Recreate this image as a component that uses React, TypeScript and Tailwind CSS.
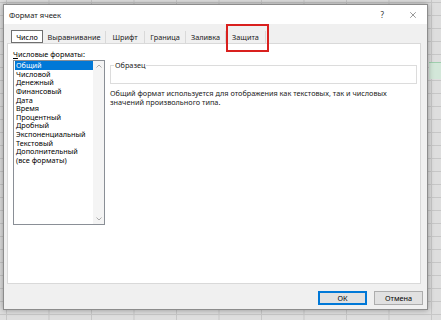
import { X } from "lucide-react";

const formats = [
  "Общий",
  "Числовой",
  "Денежный",
  "Финансовый",
  "Дата",
  "Время",
  "Процентный",
  "Дробный",
  "Экспоненциальный",
  "Текстовый",
  "Дополнительный",
  "(все форматы)",
];

const tabs = [
  { label: "Выравнивание", w: "w-[63px]" },
  { label: "Шрифт", w: "w-[39px]" },
  { label: "Граница", w: "w-[41px]" },
  { label: "Заливка", w: "w-[40px]" },
  { label: "Защита", w: "w-[40px]" },
];

const App = () => {
  return (
    <div className="relative w-[441px] h-[320px] overflow-hidden bg-[#dedede] bg-[linear-gradient(#c7c7c7_1px,transparent_1px),linear-gradient(90deg,#c7c7c7_1px,transparent_1px)] bg-size-[42.5px_13px] bg-position-[6px_2px] pl-[3px] pt-[4px] font-['Noto_Sans',sans-serif] text-[7.3px] leading-[8px] text-black">
      {/* excel selected row behind the dialog */}
      <div className="absolute left-[429px] top-[62px] w-[12px] h-[17px] bg-[#d3e7d9] border-t border-[#9fcfae]" />

      <div className="relative flex flex-col w-[425px] h-[306px] bg-[#f0f0f0] border border-[#8c8c8c] shadow-[0_0_6px_rgba(0,0,0,0.35)]">
        {/* title bar */}
        <div className="flex items-center h-[19px] bg-white pl-[5px] pr-[9px] text-[7.6px]">
          <span className="text-[#1a1a1a]">Формат ячеек</span>
          <span className="ml-auto mr-[24px] text-[8px] text-[#333]">?</span>
          <X size={10} strokeWidth={1.2} className="text-[#333]" />
        </div>

        {/* tabs */}
        <div className="flex items-end h-[19px] pl-[7px]">
          <div className="flex items-center justify-center w-[32px] h-[13px] bg-white border border-[#6f6f6f]">
            Число
          </div>
          {tabs.map((t) => (
            <div
              key={t.label}
              className={`flex items-center justify-center ${t.w} h-[12px] border-r border-[#d9d9d9] text-[#222]`}
            >
              {t.label}
            </div>
          ))}
        </div>

        {/* content panel */}
        <div className="flex ml-[3px] mr-[6px] h-[241px] bg-white border border-[#d9d9d9]">
          <div className="flex flex-col pl-[5px] pt-[6px]">
            <span>
              <span className="underline underline-offset-1">Ч</span>исловые форматы:
            </span>
            <div className="flex mt-[2px] w-[92px] h-[165px] border border-[#8a8f96]">
              <div className="flex-1 flex flex-col pl-[1px] leading-[8.64px]">
                {formats.map((f, i) => (
                  <div
                    key={f}
                    className={`pl-[1px] whitespace-nowrap ${i === 0 ? "bg-[#0078d7] text-white" : ""}`}
                  >
                    {f}
                  </div>
                ))}
              </div>
              <div className="flex flex-col items-center justify-between w-[11px] bg-[#f4f4f4] py-[3px]">
                <svg width="6" height="4" viewBox="0 0 6 4">
                  <path d="M0.5 3.5 L3 1 L5.5 3.5" fill="none" stroke="#a3a3a3" strokeWidth="0.9" />
                </svg>
                <svg width="6" height="4" viewBox="0 0 6 4">
                  <path d="M0.5 0.5 L3 3 L5.5 0.5" fill="none" stroke="#a3a3a3" strokeWidth="0.9" />
                </svg>
              </div>
            </div>
          </div>

          <div className="flex flex-col flex-1 pl-[5px] pr-[3px]">
            <fieldset className="mt-[17px] h-[23px] border border-[#dcdcdc] px-[3px]">
              <legend className="px-[1px] text-[#1a1a1a]">Образец</legend>
            </fieldset>
            <p className="mt-[5px] leading-[9px] text-[#1a1a1a]">
              Общий формат используется для отображения как текстовых, так и числовых
              <br />
              значений произвольного типа.
            </p>
          </div>
        </div>

        {/* footer buttons */}
        <div className="flex justify-end gap-[7px] pr-[4px] pt-[7px]">
          <button className="w-[49px] h-[14px] bg-[#e1e1e1] border border-[#0078d7] shadow-[inset_0_0_0_1px_#0078d7]">
            ОК
          </button>
          <button className="w-[49px] h-[14px] bg-[#e1e1e1] border border-[#adadad]">
            Отмена
          </button>
        </div>
      </div>

      {/* red highlight around the Защита tab */}
      <div className="absolute left-[226px] top-[24px] w-[43px] h-[28px] border-2 border-[#d9201e]" />
    </div>
  );
};

export default App;
